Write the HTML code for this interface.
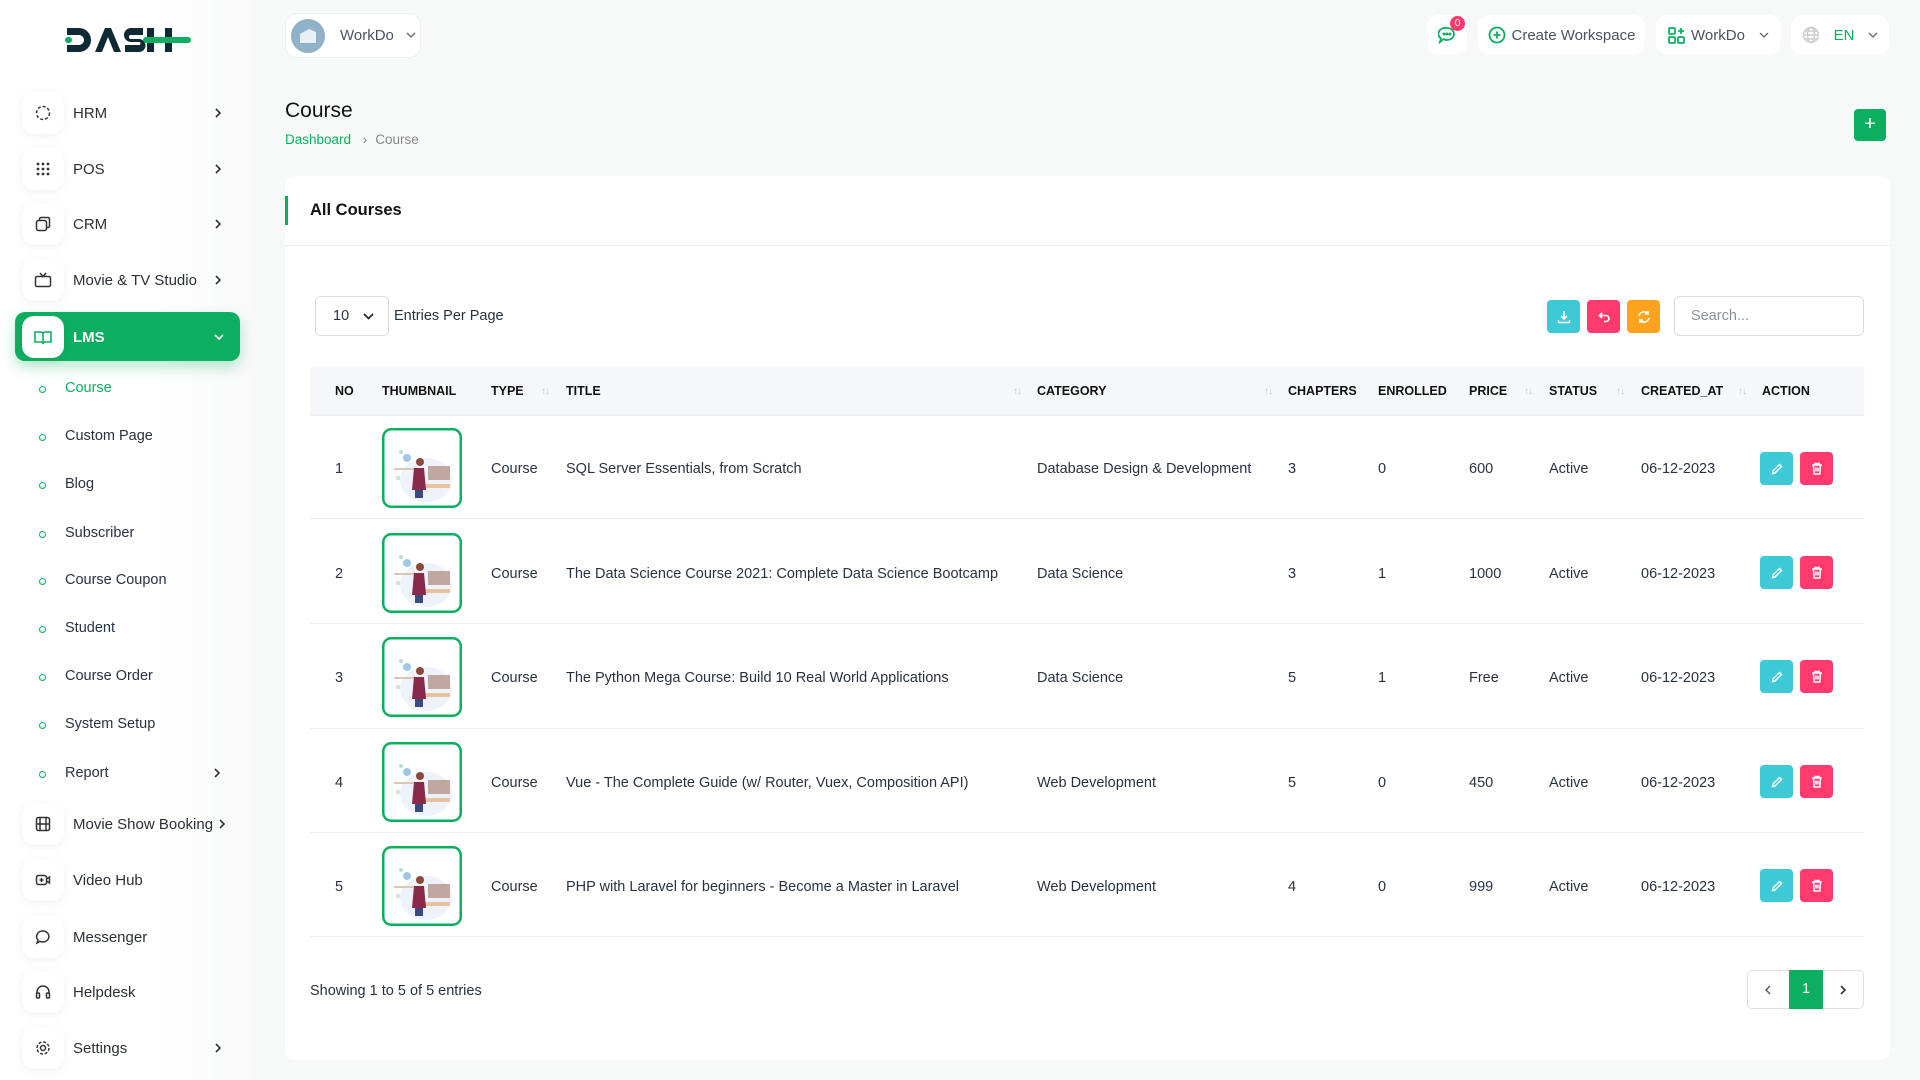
<!DOCTYPE html>
<html><head><meta charset="utf-8"><style>
*{box-sizing:border-box;margin:0;padding:0}
body{width:1920px;height:1080px;overflow:hidden;background:#f7f8f8;font-family:"Liberation Sans",sans-serif;color:#293240;position:relative;font-size:14.5px}
.abs{position:absolute}
.side{position:absolute;left:0;top:0;width:262px;height:1080px;background:linear-gradient(to right,#fff 60%,#f7f8f8)}
.nav{position:absolute;left:22px;height:42px;display:flex;align-items:center;font-size:15px;color:#2b2f36;width:210px}
.nav .ic{width:42px;height:42px;border-radius:12px;background:#fff;box-shadow:0 2px 10px rgba(0,0,0,.06);display:flex;align-items:center;justify-content:center;margin-right:9px}
.nav .ar{position:absolute;right:10px;top:16px}
.sub{position:absolute;left:44px;font-size:14.5px;color:#293240;white-space:nowrap}
.sub:before{content:"";position:absolute;left:-5px;top:6px;width:5px;height:5px;border:1.5px solid #0caf60;border-radius:50%}
.sub span{margin-left:21px}
.tb{position:absolute;top:15px;height:40px;background:#fff;border-radius:12px;display:flex;align-items:center;justify-content:center;font-size:15px;color:#4a5361}
.card{position:absolute;left:285px;top:176px;width:1605px;height:884px;background:#fff;border-radius:10px}
.th{position:absolute;top:0;height:49px;line-height:49px;font-weight:bold;font-size:12.5px;color:#111;white-space:nowrap}
.srt{position:absolute;top:0;height:49px;line-height:49px;font-size:10px;color:#c5c9d0;letter-spacing:-1px}
.cell{position:absolute;font-size:14.5px;color:#293240;white-space:nowrap;top:2px}
.btn{position:absolute;width:33px;height:33px;border-radius:4px;display:flex;align-items:center;justify-content:center}
</style></head><body>
<svg width="0" height="0" style="position:absolute"><defs>
<g id="th"><rect x="1.25" y="1.25" width="77.5" height="77.5" rx="8" fill="#fff" stroke="#0caf60" stroke-width="2.5"/><ellipse cx="44" cy="52" rx="26" ry="22" fill="#eef2fa"/><circle cx="25" cy="30" r="4" fill="#9fc8e8"/><circle cx="19" cy="24" r="2" fill="#b8e0c9"/><rect x="12" y="40" width="24" height="2" fill="#d9c7b8"/><rect x="46" y="38" width="22" height="14" fill="#c0a8a0"/><rect x="32" y="56" width="36" height="4" fill="#e8c3a0"/><circle cx="38" cy="34" r="4" fill="#8a4a3a"/><path d="M32 40h10l2 22H30z" fill="#8a2a4a"/><rect x="33" y="62" width="8" height="8" fill="#3a4a7a"/><rect x="14" y="48" width="4" height="4" fill="#cfe8d6"/></g>
<path id="chev" d="M1 1l4 4-4 4" fill="none" stroke="#333" stroke-width="1.6"/>
</defs></svg>
<div class="side">
  <div class="abs" style="left:65px;top:24px">
    <svg width="126" height="32" viewBox="0 0 126 32"><g fill="#0f2a35"><path d="M2 4h12a12 12 0 0 1 0 24H2v-7h12a5 5 0 0 0 0-10H2z"/><path d="M30 28l10-24h6l10 24h-7l-6-15-6 15z"/><path d="M60 4h18v7H66a2 2 0 0 0 0 4h8a6.5 6.5 0 0 1 0 13H60v-7h14a1.5 1.5 0 0 0 0-3h-8a7 7 0 0 1 0-14z"/><rect x="82" y="4" width="7" height="24"/><rect x="100" y="4" width="7" height="24"/></g><rect x="78" y="13" width="48" height="6" rx="3" fill="#0caf60"/><rect x="0" y="13" width="7" height="6" rx="3" fill="#0caf60"/></svg>
  </div>
  <div class="nav" style="top:92px"><div class="ic"><svg width="16" height="16" fill="none" stroke="#333" stroke-width="1.5" stroke-dasharray="3 2"><circle cx="8" cy="8" r="6.5"/></svg></div>HRM<svg class="ar" width="7" height="10"><use href="#chev"/></svg></div>
  <div class="nav" style="top:148px"><div class="ic"><svg width="16" height="16" fill="#333"><circle cx="3" cy="3" r="1.4"/><circle cx="8" cy="3" r="1.4"/><circle cx="13" cy="3" r="1.4"/><circle cx="3" cy="8" r="1.4"/><circle cx="8" cy="8" r="1.4"/><circle cx="13" cy="8" r="1.4"/><circle cx="3" cy="13" r="1.4"/><circle cx="8" cy="13" r="1.4"/><circle cx="13" cy="13" r="1.4"/></svg></div>POS<svg class="ar" width="7" height="10"><use href="#chev"/></svg></div>
  <div class="nav" style="top:203px"><div class="ic"><svg width="16" height="16" fill="none" stroke="#333" stroke-width="1.5"><rect x="1.5" y="4.5" width="10" height="10" rx="2"/><path d="M4.5 4.5V3a1.5 1.5 0 0 1 1.5-1.5h7A1.5 1.5 0 0 1 14.5 3v7a1.5 1.5 0 0 1-1.5 1.5h-1.5"/></svg></div>CRM<svg class="ar" width="7" height="10"><use href="#chev"/></svg></div>
  <div class="nav" style="top:259px"><div class="ic"><svg width="18" height="16" fill="none" stroke="#333" stroke-width="1.5"><rect x="1.5" y="4.5" width="15" height="10" rx="1.5"/><path d="M6 1l3 3.5L12 1"/></svg></div>Movie &amp; TV Studio<svg class="ar" width="7" height="10"><use href="#chev"/></svg></div>
  <div class="abs" style="left:15px;top:312px;width:225px;height:49px;background:#0caf60;border-radius:10px;box-shadow:0 6px 14px rgba(12,175,96,.3)"></div>
  <div class="nav" style="top:316px;color:#fff;font-weight:bold"><div class="ic"><svg width="18" height="16" fill="none" stroke="#0caf60" stroke-width="1.6"><path d="M1 3h6a2 2 0 0 1 2 2v10a2 2 0 0 0-2-2H1zM17 3h-6a2 2 0 0 0-2 2v10a2 2 0 0 1 2-2h6z"/></svg></div>LMS<svg class="ar" style="top:18px;right:8px" width="10" height="7"><path d="M1 1l4 4 4-4" fill="none" stroke="#fff" stroke-width="1.6"/></svg></div>
  <div class="sub" style="top:380px;color:#0caf60"><span>Course</span></div>
  <div class="sub" style="top:428px"><span>Custom Page</span></div>
  <div class="sub" style="top:476px"><span>Blog</span></div>
  <div class="sub" style="top:525px"><span>Subscriber</span></div>
  <div class="sub" style="top:572px"><span>Course Coupon</span></div>
  <div class="sub" style="top:620px"><span>Student</span></div>
  <div class="sub" style="top:668px"><span>Course Order</span></div>
  <div class="sub" style="top:716px"><span>System Setup</span></div>
  <div class="sub" style="top:765px"><span>Report</span><svg class="abs" style="left:170px;top:3px" width="7" height="10"><use href="#chev"/></svg></div>
  <div class="nav" style="top:803px"><div class="ic"><svg width="16" height="16" fill="none" stroke="#333" stroke-width="1.5"><rect x="1.5" y="1.5" width="13" height="13" rx="2"/><path d="M5 1.5v13M11 1.5v13M1.5 8h13"/></svg></div>Movie Show Booking<svg class="ar" style="right:6px" width="7" height="10"><use href="#chev"/></svg></div>
  <div class="nav" style="top:859px"><div class="ic"><svg width="16" height="16" fill="none" stroke="#333" stroke-width="1.5"><rect x="1.5" y="3.5" width="10" height="9" rx="2"/><path d="M11.5 7l3-2v6l-3-2M6.5 6v4M4.5 8h4"/></svg></div>Video Hub</div>
  <div class="nav" style="top:916px"><div class="ic"><svg width="16" height="16" fill="none" stroke="#333" stroke-width="1.5"><path d="M8 2a6 5.5 0 1 1-3 10.3L2 14l1-3A6 5.5 0 0 1 8 2z"/></svg></div>Messenger</div>
  <div class="nav" style="top:971px"><div class="ic"><svg width="16" height="16" fill="none" stroke="#333" stroke-width="1.5"><path d="M2 10V8a6 6 0 0 1 12 0v2"/><rect x="1.5" y="9" width="3" height="5" rx="1"/><rect x="11.5" y="9" width="3" height="5" rx="1"/></svg></div>Helpdesk</div>
  <div class="nav" style="top:1027px"><div class="ic"><svg width="16" height="16" fill="none" stroke="#333" stroke-width="1.5"><circle cx="8" cy="8" r="2.5"/><circle cx="8" cy="8" r="6" stroke-dasharray="3 1.7"/></svg></div>Settings<svg class="ar" width="7" height="10"><use href="#chev"/></svg></div>
</div>

<div class="tb" style="left:285px;top:13px;width:136px;height:45px;justify-content:flex-start;padding-left:5px;border:1px solid #eef0f2">
  <div style="width:34px;height:34px;border-radius:50%;background:#8fb1c9;margin-right:15px;display:flex;align-items:center;justify-content:center"><svg width="20" height="16" fill="#fff"><path d="M2 6l9-5 7 3v11H2z" opacity=".8"/></svg></div>WorkDo <svg style="margin-left:12px" width="10" height="7"><path d="M1 1l4 4 4-4" fill="none" stroke="#666" stroke-width="1.3"/></svg></div>
<div class="tb" style="left:1427px;width:40px"><svg width="18" height="18" fill="none" stroke="#0caf60" stroke-width="1.8"><path d="M9 2a7 6 0 1 1-3.5 11.2L2 16l1-3.5A7 6 0 0 1 9 2z"/><circle cx="6" cy="8" r=".6" fill="#0caf60"/><circle cx="9" cy="8" r=".6" fill="#0caf60"/><circle cx="12" cy="8" r=".6" fill="#0caf60"/></svg><span class="abs" style="left:23px;top:1px;width:15px;height:15px;border-radius:50%;background:#ff3a6e;color:#fff;font-size:10px;text-align:center;line-height:15px">0</span></div>
<div class="tb" style="left:1478px;width:167px"><svg width="18" height="18" fill="none" stroke="#0caf60" stroke-width="1.8" style="margin-right:6px"><circle cx="9" cy="9" r="7.5"/><path d="M9 5.5v7M5.5 9h7"/></svg>Create Workspace</div>
<div class="tb" style="left:1656px;width:125px"><svg width="17" height="17" fill="none" stroke="#0caf60" stroke-width="1.8" style="margin-right:6px"><rect x="1" y="1" width="6" height="6" rx="1"/><rect x="1" y="10" width="6" height="6" rx="1"/><rect x="10" y="10" width="6" height="6" rx="1"/><path d="M13 1v6M10 4h6"/></svg>WorkDo<svg style="margin-left:14px" width="10" height="7"><path d="M1 1l4 4 4-4" fill="none" stroke="#666" stroke-width="1.3"/></svg></div>
<div class="tb" style="left:1791px;width:98px"><svg width="18" height="18" fill="none" stroke="#ccc" stroke-width="1.4" style="margin-right:14px"><circle cx="9" cy="9" r="7.5"/><ellipse cx="9" cy="9" rx="3.5" ry="7.5"/><path d="M1.5 9h15M3 5h12M3 13h12"/></svg><span style="color:#0caf60">EN</span><svg style="margin-left:14px" width="10" height="7"><path d="M1 1l4 4 4-4" fill="none" stroke="#666" stroke-width="1.3"/></svg></div>

<div class="abs" style="left:285px;top:99px;font-size:21px;color:#111">Course</div>
<div class="abs" style="left:285px;top:132px;font-size:13.5px;color:#0caf60">Dashboard <span style="color:#888;margin:0 8px">›</span><span style="color:#888">Course</span></div>
<div class="abs" style="left:1854px;top:109px;width:32px;height:32px;background:#0caf60;border-radius:4px;color:#fff;text-align:center;line-height:31px;font-size:20px">+</div>

<div class="card">
  <div class="abs" style="left:0;top:20px;width:3px;height:29px;background:#0caf60"></div>
  <div class="abs" style="left:25px;top:25px;font-size:16.5px;font-weight:bold;color:#111">All Courses</div>
  <div class="abs" style="left:0;top:69px;width:1605px;height:1px;background:#eef0f2"></div>
  <div class="abs" style="left:30px;top:120px;width:74px;height:40px;border:1px solid #d8dce2;border-radius:5px;font-size:14.5px;line-height:38px;padding-left:17px">10 <svg style="margin-left:10px" width="11" height="7"><path d="M1 1l4.5 4.5L10 1" fill="none" stroke="#222" stroke-width="1.6"/></svg></div>
  <div class="abs" style="left:109px;top:132px">Entries Per Page</div>
  <div class="btn" style="left:1262px;top:124px;background:#3ec9d6"><svg width="14" height="14" fill="none" stroke="#fff" stroke-width="1.6"><path d="M7 1v8M4 6l3 3 3-3M1.5 10v2.5h11V10"/></svg></div>
  <div class="btn" style="left:1302px;top:124px;background:#ff3a6e"><svg width="12" height="12" fill="none" stroke="#fff" stroke-width="1.6"><path d="M4 2L1.5 4.5 4 7M1.5 4.5H8a3 3 0 0 1 0 6H6"/></svg></div>
  <div class="btn" style="left:1342px;top:124px;background:#ffa21d"><svg width="14" height="14" fill="none" stroke="#fff" stroke-width="1.6"><path d="M2 6a5 5 0 0 1 9-2M12 8a5 5 0 0 1-9 2M11 1v3H8M3 13v-3h3"/></svg></div>
  <div class="abs" style="left:1389px;top:120px;width:190px;height:40px;border:1px solid #d8dce2;border-radius:6px;padding-left:16px;line-height:38px;color:#8a929c">Search...</div>

  <div class="abs" style="left:25px;top:191px;width:1554px;height:49px;background:#f6f7fb;border-bottom:2px solid #eef0f3">
    <div class="th" style="left:25px">NO</div>
    <div class="th" style="left:72px">THUMBNAIL</div>
    <div class="th" style="left:181px">TYPE</div><div class="srt" style="left:231px">↑↓</div>
    <div class="th" style="left:256px">TITLE</div><div class="srt" style="left:703px">↑↓</div>
    <div class="th" style="left:727px">CATEGORY</div><div class="srt" style="left:954px">↑↓</div>
    <div class="th" style="left:978px">CHAPTERS</div>
    <div class="th" style="left:1068px">ENROLLED</div>
    <div class="th" style="left:1159px">PRICE</div><div class="srt" style="left:1214px">↑↓</div>
    <div class="th" style="left:1239px">STATUS</div><div class="srt" style="left:1306px">↑↓</div>
    <div class="th" style="left:1331px">CREATED_AT</div><div class="srt" style="left:1428px">↑↓</div>
    <div class="th" style="left:1452px">ACTION</div>
  </div>
  <div class="abs" style="left:25px;top:807px">Showing 1 to 5 of 5 entries</div>
  <div class="abs" style="left:1462px;top:794px;width:117px;height:39px;border:1px solid #dde1e6;border-radius:5px"></div>
  <svg class="abs" style="left:1479px;top:809px" width="7" height="10"><path d="M6 1L2 5l4 4" fill="none" stroke="#555" stroke-width="1.4"/></svg>
  <div class="abs" style="left:1504px;top:794px;width:34px;height:39px;background:#0caf60;color:#fff;text-align:center;line-height:39px">1</div>
  <svg class="abs" style="left:1555px;top:809px" width="7" height="10"><use href="#chev"/></svg>
</div>

<div class="abs" style="left:310px;top:518px;width:1554px;height:1px;background:#eef0f2"></div>
<div class="abs" style="left:310px;top:623px;width:1554px;height:1px;background:#eef0f2"></div>
<div class="abs" style="left:310px;top:728px;width:1554px;height:1px;background:#eef0f2"></div>
<div class="abs" style="left:310px;top:832px;width:1554px;height:1px;background:#eef0f2"></div>
<div class="abs" style="left:310px;top:936px;width:1554px;height:1px;background:#eef0f2"></div>

<div class="abs" style="left:0;top:459px">
  <div class="cell" style="left:335px">1</div><svg class="abs" style="left:382px;top:-31px" width="80" height="80"><use href="#th"/></svg>
  <div class="cell" style="left:491px">Course</div><div class="cell" style="left:566px">SQL Server Essentials, from Scratch</div><div class="cell" style="left:1037px">Database Design &amp; Development</div>
  <div class="cell" style="left:1288px">3</div><div class="cell" style="left:1378px">0</div><div class="cell" style="left:1469px">600</div><div class="cell" style="left:1549px">Active</div><div class="cell" style="left:1641px">06-12-2023</div>
</div>
<div class="abs" style="left:0;top:564px">
  <div class="cell" style="left:335px">2</div><svg class="abs" style="left:382px;top:-31px" width="80" height="80"><use href="#th"/></svg>
  <div class="cell" style="left:491px">Course</div><div class="cell" style="left:566px">The Data Science Course 2021: Complete Data Science Bootcamp</div><div class="cell" style="left:1037px">Data Science</div>
  <div class="cell" style="left:1288px">3</div><div class="cell" style="left:1378px">1</div><div class="cell" style="left:1469px">1000</div><div class="cell" style="left:1549px">Active</div><div class="cell" style="left:1641px">06-12-2023</div>
</div>
<div class="abs" style="left:0;top:668px">
  <div class="cell" style="left:335px">3</div><svg class="abs" style="left:382px;top:-31px" width="80" height="80"><use href="#th"/></svg>
  <div class="cell" style="left:491px">Course</div><div class="cell" style="left:566px">The Python Mega Course: Build 10 Real World Applications</div><div class="cell" style="left:1037px">Data Science</div>
  <div class="cell" style="left:1288px">5</div><div class="cell" style="left:1378px">1</div><div class="cell" style="left:1469px">Free</div><div class="cell" style="left:1549px">Active</div><div class="cell" style="left:1641px">06-12-2023</div>
</div>
<div class="abs" style="left:0;top:773px">
  <div class="cell" style="left:335px">4</div><svg class="abs" style="left:382px;top:-31px" width="80" height="80"><use href="#th"/></svg>
  <div class="cell" style="left:491px">Course</div><div class="cell" style="left:566px">Vue - The Complete Guide (w/ Router, Vuex, Composition API)</div><div class="cell" style="left:1037px">Web Development</div>
  <div class="cell" style="left:1288px">5</div><div class="cell" style="left:1378px">0</div><div class="cell" style="left:1469px">450</div><div class="cell" style="left:1549px">Active</div><div class="cell" style="left:1641px">06-12-2023</div>
</div>
<div class="abs" style="left:0;top:877px">
  <div class="cell" style="left:335px">5</div><svg class="abs" style="left:382px;top:-31px" width="80" height="80"><use href="#th"/></svg>
  <div class="cell" style="left:491px">Course</div><div class="cell" style="left:566px">PHP with Laravel for beginners - Become a Master in Laravel</div><div class="cell" style="left:1037px">Web Development</div>
  <div class="cell" style="left:1288px">4</div><div class="cell" style="left:1378px">0</div><div class="cell" style="left:1469px">999</div><div class="cell" style="left:1549px">Active</div><div class="cell" style="left:1641px">06-12-2023</div>
</div>

<div class="btn" style="left:1760px;top:452px;background:#3ec9d6"><svg width="12" height="12" fill="none" stroke="#fff" stroke-width="1.5"><path d="M8.5 1.5l2 2L4 10l-2.5.5L2 8z"/></svg></div>
<div class="btn" style="left:1800px;top:452px;background:#ff3a6e"><svg width="12" height="13" fill="none" stroke="#fff" stroke-width="1.5"><path d="M1 3h10M4 3V1.5h4V3M2.5 3l.7 9h5.6l.7-9M5 5.5v4M7 5.5v4"/></svg></div>
<div class="btn" style="left:1760px;top:556px;background:#3ec9d6"><svg width="12" height="12" fill="none" stroke="#fff" stroke-width="1.5"><path d="M8.5 1.5l2 2L4 10l-2.5.5L2 8z"/></svg></div>
<div class="btn" style="left:1800px;top:556px;background:#ff3a6e"><svg width="12" height="13" fill="none" stroke="#fff" stroke-width="1.5"><path d="M1 3h10M4 3V1.5h4V3M2.5 3l.7 9h5.6l.7-9M5 5.5v4M7 5.5v4"/></svg></div>
<div class="btn" style="left:1760px;top:660px;background:#3ec9d6"><svg width="12" height="12" fill="none" stroke="#fff" stroke-width="1.5"><path d="M8.5 1.5l2 2L4 10l-2.5.5L2 8z"/></svg></div>
<div class="btn" style="left:1800px;top:660px;background:#ff3a6e"><svg width="12" height="13" fill="none" stroke="#fff" stroke-width="1.5"><path d="M1 3h10M4 3V1.5h4V3M2.5 3l.7 9h5.6l.7-9M5 5.5v4M7 5.5v4"/></svg></div>
<div class="btn" style="left:1760px;top:765px;background:#3ec9d6"><svg width="12" height="12" fill="none" stroke="#fff" stroke-width="1.5"><path d="M8.5 1.5l2 2L4 10l-2.5.5L2 8z"/></svg></div>
<div class="btn" style="left:1800px;top:765px;background:#ff3a6e"><svg width="12" height="13" fill="none" stroke="#fff" stroke-width="1.5"><path d="M1 3h10M4 3V1.5h4V3M2.5 3l.7 9h5.6l.7-9M5 5.5v4M7 5.5v4"/></svg></div>
<div class="btn" style="left:1760px;top:869px;background:#3ec9d6"><svg width="12" height="12" fill="none" stroke="#fff" stroke-width="1.5"><path d="M8.5 1.5l2 2L4 10l-2.5.5L2 8z"/></svg></div>
<div class="btn" style="left:1800px;top:869px;background:#ff3a6e"><svg width="12" height="13" fill="none" stroke="#fff" stroke-width="1.5"><path d="M1 3h10M4 3V1.5h4V3M2.5 3l.7 9h5.6l.7-9M5 5.5v4M7 5.5v4"/></svg></div>
</body></html>
